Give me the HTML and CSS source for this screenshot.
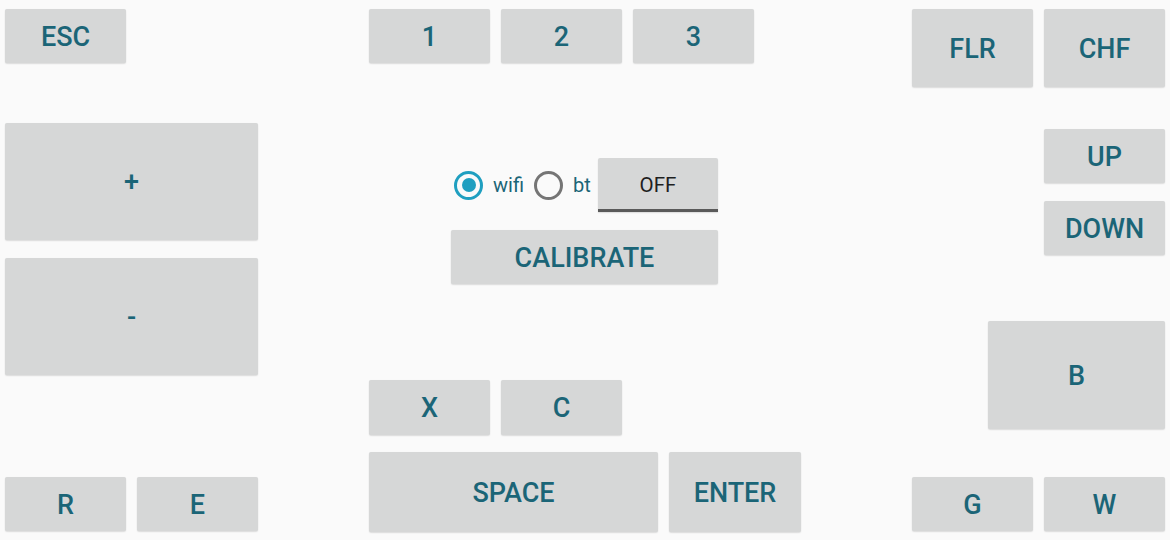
FILE: index.html
```html
<!DOCTYPE html>
<html>
<head>
<meta charset="utf-8">
<link rel="stylesheet" href="styles.css">
</head>
<body>
<div class="pad">
  <div class="key k-esc">ESC</div>
  <div class="key k-1">1</div>
  <div class="key k-2">2</div>
  <div class="key k-3">3</div>
  <div class="key k-flr">FLR</div>
  <div class="key k-chf">CHF</div>
  <div class="key k-plus">+</div>
  <div class="key k-minus">-</div>
  <div class="key k-up">UP</div>
  <div class="key k-down">DOWN</div>
  <div class="key k-b">B</div>
  <div class="key k-r">R</div>
  <div class="key k-e">E</div>
  <div class="key k-x">X</div>
  <div class="key k-c">C</div>
  <div class="key k-space">SPACE</div>
  <div class="key k-enter">ENTER</div>
  <div class="key k-g">G</div>
  <div class="key k-w">W</div>

  <div class="center">
    <div class="conn">
      <label class="radio on"><span class="dot"></span><span class="rlabel">wifi</span></label>
      <label class="radio"><span class="dot"></span><span class="rlabel">bt</span></label>
      <div class="toggle">OFF</div>
    </div>
    <div class="key calibrate">CALIBRATE</div>
  </div>
</div>
</body>
</html>
```
FILE: styles.css
```css
* { box-sizing: border-box; }
html, body { margin: 0; padding: 0; }
body {
  background: #fafafa;
  font-family: Roboto, "Liberation Sans", sans-serif;
  width: 1170px;
  height: 540px;
  overflow: hidden;
}
.pad {
  position: relative;
  width: 1170px;
  height: 540px;
}
.key {
  position: absolute;
  display: flex;
  align-items: center;
  justify-content: center;
  padding-top: 1px;
  background: #d6d7d7;
  border-radius: 2px;
  box-shadow: 0 1px 1.5px rgba(0,0,0,0.12), 0 0 1px rgba(0,0,0,0.06);
  color: #1b6577;
  font-weight: 500;
  font-size: 27px;
}
.k-esc { left: 5px; top: 9px; width: 121px; height: 54px; }
.k-1 { left: 369px; top: 9px; width: 121px; height: 54px; }
.k-2 { left: 501px; top: 9px; width: 121px; height: 54px; }
.k-3 { left: 633px; top: 9px; width: 121px; height: 54px; }
.k-flr { left: 912px; top: 9px; width: 121px; height: 78px; }
.k-chf { left: 1044px; top: 9px; width: 121px; height: 78px; }
.k-plus { left: 5px; top: 123px; width: 253px; height: 117px; }
.k-minus { left: 5px; top: 258px; width: 253px; height: 117px; }
.k-up { left: 1044px; top: 129px; width: 121px; height: 54px; }
.k-down { left: 1044px; top: 201px; width: 121px; height: 54px; }
.k-b { left: 988px; top: 321px; width: 177px; height: 108px; }
.k-r { left: 5px; top: 477px; width: 121px; height: 54px; }
.k-e { left: 137px; top: 477px; width: 121px; height: 54px; }
.k-x { left: 369px; top: 380px; width: 121px; height: 55px; }
.k-c { left: 501px; top: 380px; width: 121px; height: 55px; }
.k-space { left: 369px; top: 452px; width: 289px; height: 80px; }
.k-enter { left: 669px; top: 452px; width: 132px; height: 80px; }
.k-g { left: 912px; top: 477px; width: 121px; height: 54px; }
.k-w { left: 1044px; top: 477px; width: 121px; height: 54px; }

.center {
  position: absolute;
  left: 451px;
  top: 158px;
  width: 267px;
  display: flex;
  flex-direction: column;
  gap: 18px;
}
.conn {
  display: flex;
  align-items: center;
  height: 54px;
}
.radio {
  display: flex;
  align-items: center;
  font-size: 20px;
  color: #1b6577;
}
.dot {
  width: 29px;
  height: 29px;
  border-radius: 50%;
  border: 3px solid #757575;
  display: flex;
  align-items: center;
  justify-content: center;
  margin-left: 3px;
}
.radio.on .dot { border-color: #1f9fc0; }
.radio.on .dot::after {
  content: "";
  width: 14px;
  height: 14px;
  border-radius: 50%;
  background: #1f9fc0;
}
.rlabel { margin-left: 10px; margin-right: 7px; }
.toggle {
  margin-left: auto;
  width: 120px;
  height: 54px;
  background: #d6d7d7;
  border-radius: 2px 2px 0 0;
  border-bottom: 3px solid #5a5a5a;
  display: flex;
  align-items: center;
  justify-content: center;
  padding-top: 3px;
  font-size: 20.5px;
  color: #1f1f1f;
  box-shadow: 0 1px 1.5px rgba(0,0,0,0.12);
}
.calibrate {
  position: static;
  height: 54px;
}
```
